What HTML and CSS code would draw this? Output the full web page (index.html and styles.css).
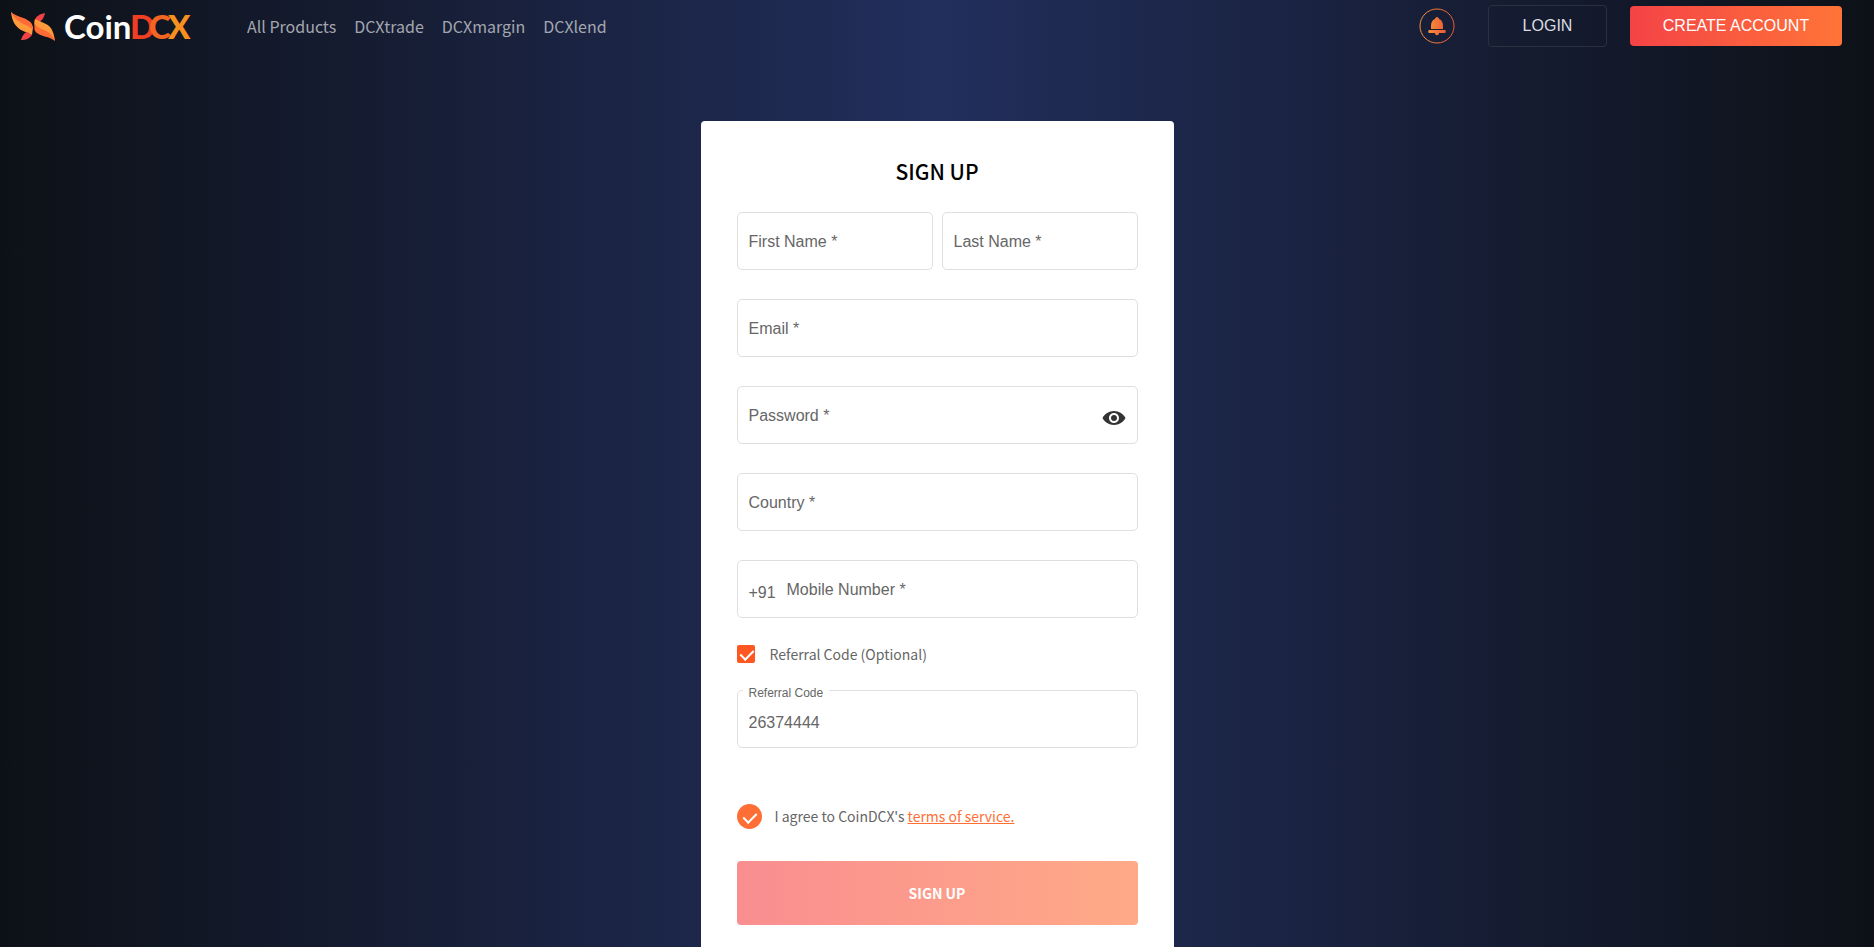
FILE: index.html
```html
<!DOCTYPE html>
<html lang="en">
<head>
    <meta charset="UTF-8">
    <meta name="viewport" content="width=device-width, initial-scale=1.0">
    <title>CoinDCX - Sign Up</title>
    <link rel="stylesheet" href="styles.css">
</head>
<body>

    <!-- Top bar -->
    <header class="navbar">
        <a href="#" class="logo" aria-label="CoinDCX">
            <svg width="184" height="48" viewBox="0 0 184 48">
                <path fill="#ff9a3c" d="M0 10 C1 19 4 24 10 28 L21 33 L22 25 C17 18 6 18 0 10Z"/>
                <path fill="#ff6b35" d="M0 10 C6 15 13 15 18 19 C21 21 22 23 22 28 C16 21 5 22 0 10Z"/>
                <path fill="#f44346" d="M10 38 C11 34 13 31 16 30 L21 33 C18 37 15 38 10 38Z"/>
                <path fill="#f44346" d="M34 11 C29 12 25 14 24 18 L28 20 C32 18 33 15 34 11Z"/>
                <path fill="#ff9a3c" d="M24 17 L35 22 C41 25 43 31 44 39 C39 31 29 31 24 25 C23 22 23 19 24 17Z"/>
                <path fill="#ff6b35" d="M24 22 C29 29 40 27 44 39 C38 34 31 35 26 31 C23 29 23 26 24 22Z"/>
                <text class="logo-text" x="53" y="37" fill="#fff">Coin</text>
                <text class="logo-text logo-bold" x="119" y="37" fill="#ef3e23">D</text>
                <text class="logo-text logo-bold" x="138" y="37" fill="#f26522">C</text>
                <text class="logo-text logo-bold" x="157" y="37" fill="#f7901e">X</text>
            </svg>
        </a>
        <nav class="menu">
            <a href="#">All Products</a>
            <a href="#">DCXtrade</a>
            <a href="#">DCXmargin</a>
            <a href="#">DCXlend</a>
        </nav>
        <div class="actions">
            <button type="button" class="bell" aria-label="Notifications">
                <svg width="36" height="36" viewBox="0 0 36 36">
                    <defs>
                        <linearGradient id="bell-color">
                            <stop offset="0" stop-color="#f7903c"/>
                            <stop offset="1" stop-color="#ee5a36"/>
                        </linearGradient>
                    </defs>
                    <circle cx="18" cy="18" r="17" fill="none" stroke="url(#bell-color)"/>
                    <path fill="url(#bell-color)" d="M18 9 C19 9 20 10 20 11 C23 12 24 15 24 18 V21 H12 V18 C12 15 13 12 16 11 C16 10 17 9 18 9Z M10 22 H26 C27 22 27 25 26 25 H10 C9 25 9 22 10 22Z M16 25 H20 C20 28 16 28 16 25Z"/>
                </svg>
            </button>
            <button type="button" class="btn-login">LOGIN</button>
            <button type="button" class="btn-create">CREATE ACCOUNT</button>
        </div>
    </header>

    <!-- Sign up form -->
    <main class="content">
        <form class="card">
            <h1>SIGN UP</h1>
            <div class="fields">
                <div class="row">
                    <div class="field">
                        <input type="text" id="first-name">
                        <label for="first-name">First Name *</label>
                    </div>
                    <div class="field">
                        <input type="text" id="last-name">
                        <label for="last-name">Last Name *</label>
                    </div>
                </div>
                <div class="field">
                    <input type="email" id="email">
                    <label for="email">Email *</label>
                </div>
                <div class="field">
                    <input type="password" id="password">
                    <label for="password">Password *</label>
                    <button type="button" class="eye" aria-label="Show password">
                        <svg width="24" height="24" viewBox="0 0 24 24">
                            <path fill="#333" d="M12 5C7 5 2.500 8 .5 12c2 4 6.500 7 11.500 7s9.500-3 11.500-7C21.500 8 17 5 12 5zM12 17c-2.800 0-5-2.200-5-5s2.200-5 5-5 5 2.200 5 5-2.200 5-5 5zm0-8c-1.700 0-3 1.300-3 3s1.300 3 3 3 3-1.300 3-3-1.300-3-3-3z"/>
                        </svg>
                    </button>
                </div>
                <div class="field">
                    <input type="text" id="country">
                    <label for="country">Country *</label>
                </div>
                <div class="field phone">
                    <span class="prefix">+91</span>
                    <input type="tel" id="mobile">
                    <label for="mobile">Mobile Number *</label>
                </div>
            </div>

            <div class="check">
                <input type="checkbox" id="has-referral" checked>
                <label for="has-referral">Referral Code (Optional)</label>
            </div>

            <div class="field filled">
                <input type="text" id="referral" value="26374444">
                <label for="referral">Referral Code</label>
            </div>

            <div class="check terms">
                <input type="checkbox" id="terms" class="round" checked>
                <label for="terms">I agree to CoinDCX's <a href="#">terms of service.</a></label>
            </div>

            <button type="submit" class="btn-submit">SIGN UP</button>
        </form>
    </main>

</body>
</html>
```
FILE: styles.css
```css
/* Base */
* { margin: 0; padding: 0; box-sizing: border-box; }
body {
    display: flex;
    flex-direction: column;
    min-height: 100vh;
    background: linear-gradient(90deg, #0d1117, #222e5c 50%, #0d1117);
    font-family: "Noto Sans CJK SC", sans-serif;
    font-size: 14px;
    color: #666;
}
button { border: none; background: none; cursor: pointer; font-family: "Liberation Sans", Arial, sans-serif; font-size: 16px; }
svg { display: block; }

/* Top bar */
.navbar { display: flex; align-items: center; height: 52px; padding: 0 32px 0 11px; }
.logo-text { font-family: Lato, sans-serif; font-size: 33px; font-weight: 700; }
.logo-bold { font-weight: 900; }
.menu { display: flex; gap: 18px; margin-left: 52px; }
.menu a { color: #a4a7b0; font-size: 16px; line-height: 24px; text-decoration: none; }
.actions { display: flex; align-items: center; margin-left: auto; }
.btn-login { width: 119px; height: 42px; margin: 0 23px 0 33px; border: 1px solid #2b3040; border-radius: 4px; color: #dcdde0; }
.btn-create { width: 212px; height: 40px; border-radius: 4px; background: linear-gradient(90deg, #f44346, #ff7438); color: #fff; }

/* Card */
.content { flex: 1; display: flex; justify-content: center; padding-top: 69px; }
.card { width: 473px; padding: 35px 36px 22px; border-radius: 4px 4px 0 0; background: #fff; }
.card h1 { margin-bottom: 26px; font-size: 21px; line-height: 30px; font-weight: 500; color: #000; text-align: center; }

/* Fields */
.fields { display: grid; gap: 29px; }
.row { display: grid; grid-template-columns: 1fr 1fr; gap: 9px; }
.field { position: relative; height: 58px; font-family: "Liberation Sans", Arial, sans-serif; font-size: 16px; }
.field input { width: 100%; height: 100%; padding: 8px 12px 0 11px; border: 1px solid #dfdfdf; border-radius: 5px; background: #fff; color: #666; font: inherit; }
.field label { position: absolute; top: 20px; left: 12px; line-height: 20px; pointer-events: none; }
.filled label { top: -7px; left: 6px; padding: 0 6px; background: #fff; font-size: 12px; }
.phone label { left: 50px; }
.phone input { padding-left: 50px; }
.prefix { position: absolute; top: 23px; left: 12px; line-height: 20px; }
.eye { position: absolute; top: 20px; right: 12px; }

/* Check boxes */
.check { display: flex; align-items: center; gap: 15px; height: 24px; margin: 24px 0; }
.check input { position: relative; appearance: none; width: 18px; height: 18px; border-radius: 2px; background: #ff5722; }
.check input::after { content: ""; position: absolute; top: 2px; left: 6px; width: 6px; height: 11px; border: solid #fff; border-width: 0 2px 2px 0; transform: rotate(45deg); }
.check input.round { width: 25px; height: 25px; border-radius: 50%; background: #ff6f35; }
.check input.round::after { top: 6px; left: 9px; }
.check a { color: #ff6f35; }
.terms { gap: 13px; margin: 56px 0 33px; }

.btn-submit { width: 100%; height: 64px; border-radius: 4px; background: linear-gradient(90deg, #f98e90, #ffaa87); color: #fff; font: 700 14px "Noto Sans CJK SC", sans-serif; }
```
